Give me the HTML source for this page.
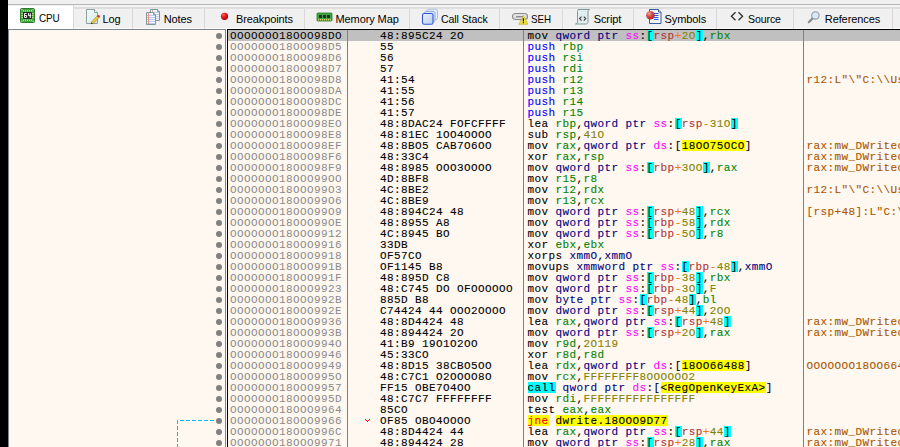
<!DOCTYPE html>
<html><head><meta charset="utf-8"><style>
*{margin:0;padding:0;box-sizing:border-box}
html,body{width:900px;height:447px;overflow:hidden;background:#f0f0f0;position:relative}
body{font-family:"Liberation Sans",sans-serif}
.black{position:absolute;left:0;top:0;width:8px;height:447px;background:#000}
.tline{position:absolute;left:8px;top:4px;width:892px;height:1px;background:#b8b8b8}
.tab{position:absolute;top:5px;height:24px;background:#f0f0f0;border-top:1px solid #f2f2f2;border-bottom:1px solid #fcfcfc}
.tab::after{content:"";position:absolute;left:0;right:0;top:0;height:2px;border-top:1px solid #f5f5f5;background:#dedede}
.tab::before{content:"";position:absolute;right:0;width:1px;top:2px;bottom:-1px;background:#d9d9d9}
.tab.tsel::before{top:-1px}
.tab.tsel{background:#fff;border-bottom-color:#fff}
.tab.tsel::after{display:none}
.ico{position:absolute;top:8px;width:16px;height:16px}
.ico svg{display:block}
.tlab{position:absolute;top:13px;transform-origin:0 0;font-size:11px;line-height:13px;color:#000;white-space:nowrap;letter-spacing:-0.1px}
.side{position:absolute;left:8px;top:29px;width:218px;height:418px;background:#fff8f0;border-left:1px solid #7d8590;border-top:1px solid #7d8590;border-right:1px solid #7d8590}
.gap{position:absolute;left:226px;top:29px;width:1px;height:418px;background:#f8f8f8}
.dis-frame{position:absolute;left:227px;top:29px;width:673px;height:418px;background:#fff8f0;border-left:1px solid #000;border-top:1px solid #000}
.row{position:absolute;left:228px;width:672px;height:11px;font-family:"Liberation Mono",monospace;font-size:11px;line-height:11px;white-space:pre;-webkit-text-stroke:0.1px currentColor}
.row.sel{background:#c0c0c0}
.row>div{position:absolute;top:0;height:11px;line-height:13px;letter-spacing:0.4px}
.row span{display:inline-block;height:11px;line-height:13px;vertical-align:top}
.addr{left:2px;width:117px;color:#8a8a8a;-webkit-text-stroke:0}
.sel .addr{color:#000}
.bytes{left:152px;width:145px;color:#000}
.dis{left:299.5px;width:276px;color:#000}
.cmt{left:578.5px;width:100px;color:#aa5500}
.vsep{position:absolute;top:30px;width:1px;height:417px;background:#808080}
.dot{position:absolute;left:215.5px;width:6px;height:6px;border-radius:50%;background:#808080}
.mn{color:#000}.pp{color:#0000ff}.call{color:#000;background:#00ffff}.jcc{color:#ff0000;background:#ffff00}
.reg{color:#008300}.sz{color:#000080}.seg{color:#ff00ff}.bs{color:#000;background:#00ffff}
.base{color:#b03434}.op{color:#f27711}.val{color:#828200}.ad{color:#000;background:#ffff00}
</style></head><body>
<div class="black"></div>
<div class="tline"></div>
<div class="tab tsel" style="left:8px;width:66px"></div><div class="tlab" style="left:39.0px;top:12px;transform:scaleX(0.9)">CPU</div><div class="tab" style="left:74px;width:59px"></div><div class="tlab" style="left:102.4px;top:13px;transform:scaleX(1)">Log</div><div class="tab" style="left:133px;width:72px"></div><div class="tlab" style="left:163.7px;top:13px;transform:scaleX(1)">Notes</div><div class="tab" style="left:205px;width:100px"></div><div class="tlab" style="left:235.9px;top:13px;transform:scaleX(1)">Breakpoints</div><div class="tab" style="left:305px;width:105px"></div><div class="tlab" style="left:335.5px;top:13px;transform:scaleX(1)">Memory Map</div><div class="tab" style="left:410px;width:90px"></div><div class="tlab" style="left:441.1px;top:13px;transform:scaleX(0.96)">Call Stack</div><div class="tab" style="left:500px;width:63px"></div><div class="tlab" style="left:531.1px;top:13px;transform:scaleX(0.89)">SEH</div><div class="tab" style="left:563px;width:71px"></div><div class="tlab" style="left:593.7px;top:13px;transform:scaleX(1)">Script</div><div class="tab" style="left:634px;width:83px"></div><div class="tlab" style="left:664.6px;top:13px;transform:scaleX(1)">Symbols</div><div class="tab" style="left:717px;width:77px"></div><div class="tlab" style="left:748.2px;top:13px;transform:scaleX(0.96)">Source</div><div class="tab" style="left:794px;width:99px"></div><div class="tlab" style="left:824.8px;top:13px;transform:scaleX(1)">References</div><div class="tab" style="left:893px;width:108px"></div>
<svg style="position:absolute;left:0;top:0;overflow:visible" width="900" height="30">
<defs>
<linearGradient id="gpage" x1="0" y1="0" x2="1" y2="1"><stop offset="0" stop-color="#f8fcfc"/><stop offset="1" stop-color="#d4e6e8"/></linearGradient>
<radialGradient id="gred" cx="0.35" cy="0.3" r="0.75"><stop offset="0" stop-color="#ff6060"/><stop offset="0.5" stop-color="#dd1818"/><stop offset="1" stop-color="#a00000"/></radialGradient>
<radialGradient id="gred2" cx="0.35" cy="0.3" r="0.75"><stop offset="0" stop-color="#f4a0a0"/><stop offset="0.5" stop-color="#d04848"/><stop offset="1" stop-color="#a82020"/></radialGradient>
<linearGradient id="gblue" x1="0" y1="0" x2="1" y2="1"><stop offset="0" stop-color="#eef4fc"/><stop offset="1" stop-color="#b8cce8"/></linearGradient>
</defs>
<!-- CPU -->
<g transform="translate(20,8)">
<rect x="0.5" y="0.5" width="14" height="14" rx="1" fill="#44a844" stroke="#2c7c2c"/>
<g fill="#d8cc84"><rect x="3" y="2" width="1" height="1.6"/><rect x="3" y="11.4" width="1" height="1.6"/><rect x="5" y="2" width="1" height="1.6"/><rect x="5" y="11.4" width="1" height="1.6"/><rect x="7" y="2" width="1" height="1.6"/><rect x="7" y="11.4" width="1" height="1.6"/><rect x="9" y="2" width="1" height="1.6"/><rect x="9" y="11.4" width="1" height="1.6"/><rect x="11" y="2" width="1" height="1.6"/><rect x="11" y="11.4" width="1" height="1.6"/><rect x="1.4" y="5" width="1.6" height="1"/><rect x="12" y="5" width="1.6" height="1"/><rect x="1.4" y="7" width="1.6" height="1"/><rect x="12" y="7" width="1.6" height="1"/><rect x="1.4" y="9" width="1.6" height="1"/><rect x="12" y="9" width="1.6" height="1"/><circle cx="1.8" cy="1.8" r="0.7"/><circle cx="13.2" cy="1.8" r="0.7"/><circle cx="1.8" cy="13.2" r="0.7"/><circle cx="13.2" cy="13.2" r="0.7"/></g>
<rect x="3" y="4" width="9" height="7" fill="#282828"/>
<path d="M6.6 5.5H4.5V9.5H6.6V7.5H4.5M8.5 5.2V7.6H11.2M10.3 5.2V10" fill="none" stroke="#f4f4f4" stroke-width="1"/>
</g>
<!-- Log -->
<g transform="translate(84,8)">
<path d="M2.5 1.5H10.5L13.5 4.5V15.5H2.5Z" fill="url(#gpage)" stroke="#8aa2a2"/>
<path d="M10.5 1.5V4.5H13.5" fill="#fff" stroke="#8aa2a2"/>
<path d="M7.2 15.8L7.8 13.6L13.6 7.8L15.2 9.4L9.4 15.2Z" fill="#ecd448" stroke="#8c7418" stroke-width="0.6"/>
<circle cx="14.6" cy="8.3" r="1.3" fill="#e23030"/>
<path d="M7 16l0.6-1.6 1 1z" fill="#111"/>
</g>
<!-- Notes -->
<g transform="translate(144,8)">
<path d="M6.5 1.5H13.5L15.5 3.5V12.5H6.5Z" fill="#fbfcff" stroke="#7e9898"/>
<g stroke="#c0ccf2" stroke-width="1"><path d="M7 4.5h8M7 6.5h8M7 8.5h8M7 10.5h8"/></g>
<path d="M8.5 2v10" stroke="#f4a0a0" stroke-width="1"/>
<path d="M13.5 1.5V3.5H15.5" fill="#fff" stroke="#7e9898"/>
<path d="M2.5 4.5H9.5L11.5 6.5V16.5H2.5Z" fill="#fbfcff" stroke="#7e9898"/>
<g stroke="#b8c6f0" stroke-width="1"><path d="M3 7.5h8M3 9.5h8M3 11.5h8M3 13.5h8M3 15.5h8"/></g>
<path d="M4.5 5v11" stroke="#f09090" stroke-width="1"/>
<path d="M9.5 4.5V6.5H11.5" fill="#fff" stroke="#7e9898"/>
</g>
<!-- Breakpoints -->
<circle cx="224.5" cy="16.3" r="3.6" fill="url(#gred)"/>
<!-- Memory map -->
<g transform="translate(316,8)">
<rect x="1" y="5" width="15" height="8" rx="0.8" fill="#3ea83e" stroke="#1f7a1f" stroke-width="0.8"/>
<rect x="3" y="7" width="3" height="3" fill="#2a2a34"/><rect x="7" y="7" width="3" height="3" fill="#2a2a34"/><rect x="11" y="7" width="3" height="3" fill="#2a2a34"/>
<g fill="#e8d070"><rect x="2" y="11" width="1" height="1.4"/><rect x="4" y="11" width="1" height="1.4"/><rect x="6" y="11" width="1" height="1.4"/><rect x="8" y="11" width="1" height="1.4"/><rect x="10" y="11" width="1" height="1.4"/><rect x="12" y="11" width="1" height="1.4"/><rect x="14" y="11" width="1" height="1.4"/></g>
</g>
<!-- Call stack -->
<g transform="translate(420,8)">
<rect x="7" y="1.2" width="10.5" height="10.5" rx="1.8" fill="#e4ecf8" stroke="#a8c0e4"/>
<rect x="4.5" y="3.4" width="10.5" height="10.5" rx="1.8" fill="#d6e2f4" stroke="#8eaee0"/>
<rect x="2.5" y="5.5" width="10.5" height="10.8" rx="1.8" fill="url(#gblue)" stroke="#3656d8" stroke-width="1.1"/>
</g>
<!-- SEH -->
<g transform="translate(511,8)">
<rect x="1.5" y="5.5" width="15" height="6" rx="3" fill="#f4f4f4" stroke="#8a8a8a" stroke-width="1.2"/>
<rect x="3" y="7" width="12" height="3" rx="1.5" fill="none" stroke="#c8c8c8" stroke-width="0.8"/>
<rect x="4" y="8" width="8" height="1.4" fill="#8c8c8c"/>
<circle cx="4.6" cy="8.7" r="0.6" fill="#fff"/>
<path d="M12.4 7.4L16.9 16.3H7.9Z" fill="#f2e23a" stroke="#b4a424" stroke-width="0.6"/>
<path d="M12.4 10.3v3.2" stroke="#111" stroke-width="1.2"/><rect x="11.8" y="14.1" width="1.2" height="1.1" fill="#111"/>
</g>
<!-- Script -->
<g transform="translate(574,8)">
<path d="M4 1.5H15.5c-0.8 0.3-1.5 1-1.5 2V14c0 1-0.8 2-2 2H1.5c1-0.3 2-1 2-2V3.5c0-1 0.5-2 0.5-2Z" fill="#e2eeee" stroke="#7e9a9a"/>
<path d="M7.5 8.6L5.6 10.6L7.5 12.6M9.8 8.6L11.7 10.6L9.8 12.6" fill="none" stroke="#3a3a3a" stroke-width="1.1"/>
</g>
<!-- Symbols -->
<g transform="translate(645,8)">
<path d="M4.5 1.5H13.5L16 4V15.5H4.5Z" fill="#f2f6fc" stroke="#3a5a9a"/>
<path d="M13.5 1.5V4H16" fill="#fff" stroke="#3a5a9a"/>
<g stroke="#2a56d8" stroke-width="1"><path d="M9 5.5h4.5M9 7.5h4.5M9 9.5h4.5M9 11.5h4.5"/></g>
<circle cx="5.4" cy="7.2" r="4.3" fill="url(#gred2)"/>
</g>
<!-- Source -->
<path d="M735.5 12.3L731.4 16.3L735.5 20.3M738.5 12.3L742.6 16.3L738.5 20.3" fill="none" stroke="#2e2e2e" stroke-width="1.3"/>
<!-- References -->
<g>
<path d="M812.6 18.4L808.8 22.2" stroke="#8a8a8a" stroke-width="2.2" stroke-linecap="round"/>
<circle cx="815.4" cy="15.4" r="3.7" fill="#dce8f4" stroke="#8c98a4" stroke-width="1.1"/>
</g>
</svg>
<div class="side"></div>
<div class="gap"></div>
<div class="dis-frame"></div>
<div class="row sel" style="top:30px"><div class="addr">OOOOOOO18OOO98DO</div><div class="bytes">48:895C24 2O</div><div class="dis"><span class="mn">mov</span> <span class="sz">qword ptr</span> <span class="seg">ss</span><span class="mn">:</span><span class="bs">[</span><span class="base">rsp</span><span class="op">+</span><span class="val">2O</span><span class="bs">]</span><span class="mn">,</span><span class="reg">rbx</span></div><div class="cmt"></div></div><div class="dot" style="top:32.5px"></div><div class="row" style="top:41px"><div class="addr">OOOOOOO18OOO98D5</div><div class="bytes">55</div><div class="dis"><span class="pp">push</span> <span class="reg">rbp</span></div><div class="cmt"></div></div><div class="dot" style="top:43.5px"></div><div class="row" style="top:52px"><div class="addr">OOOOOOO18OOO98D6</div><div class="bytes">56</div><div class="dis"><span class="pp">push</span> <span class="reg">rsi</span></div><div class="cmt"></div></div><div class="dot" style="top:54.5px"></div><div class="row" style="top:63px"><div class="addr">OOOOOOO18OOO98D7</div><div class="bytes">57</div><div class="dis"><span class="pp">push</span> <span class="reg">rdi</span></div><div class="cmt"></div></div><div class="dot" style="top:65.5px"></div><div class="row" style="top:74px"><div class="addr">OOOOOOO18OOO98D8</div><div class="bytes">41:54</div><div class="dis"><span class="pp">push</span> <span class="reg">r12</span></div><div class="cmt">r12:L"\"C:\\Users</div></div><div class="dot" style="top:76.5px"></div><div class="row" style="top:85px"><div class="addr">OOOOOOO18OOO98DA</div><div class="bytes">41:55</div><div class="dis"><span class="pp">push</span> <span class="reg">r13</span></div><div class="cmt"></div></div><div class="dot" style="top:87.5px"></div><div class="row" style="top:96px"><div class="addr">OOOOOOO18OOO98DC</div><div class="bytes">41:56</div><div class="dis"><span class="pp">push</span> <span class="reg">r14</span></div><div class="cmt"></div></div><div class="dot" style="top:98.5px"></div><div class="row" style="top:107px"><div class="addr">OOOOOOO18OOO98DE</div><div class="bytes">41:57</div><div class="dis"><span class="pp">push</span> <span class="reg">r15</span></div><div class="cmt"></div></div><div class="dot" style="top:109.5px"></div><div class="row" style="top:118px"><div class="addr">OOOOOOO18OOO98EO</div><div class="bytes">48:8DAC24 FOFCFFFF</div><div class="dis"><span class="mn">lea</span> <span class="reg">rbp</span><span class="mn">,</span><span class="sz">qword ptr</span> <span class="seg">ss</span><span class="mn">:</span><span class="bs">[</span><span class="base">rsp</span><span class="op">-</span><span class="val">31O</span><span class="bs">]</span></div><div class="cmt"></div></div><div class="dot" style="top:120.5px"></div><div class="row" style="top:129px"><div class="addr">OOOOOOO18OOO98E8</div><div class="bytes">48:81EC 1OO4OOOO</div><div class="dis"><span class="mn">sub</span> <span class="reg">rsp</span><span class="mn">,</span><span class="val">41O</span></div><div class="cmt"></div></div><div class="dot" style="top:131.5px"></div><div class="row" style="top:140px"><div class="addr">OOOOOOO18OOO98EF</div><div class="bytes">48:8BO5 CAB7O6OO</div><div class="dis"><span class="mn">mov</span> <span class="reg">rax</span><span class="mn">,</span><span class="sz">qword ptr</span> <span class="seg">ds</span><span class="mn">:</span><span class="mn">[</span><span class="ad">18OO75OCO</span><span class="mn">]</span></div><div class="cmt">rax:mw_DWritecore</div></div><div class="dot" style="top:142.5px"></div><div class="row" style="top:151px"><div class="addr">OOOOOOO18OOO98F6</div><div class="bytes">48:33C4</div><div class="dis"><span class="mn">xor</span> <span class="reg">rax</span><span class="mn">,</span><span class="reg">rsp</span></div><div class="cmt">rax:mw_DWritecore</div></div><div class="dot" style="top:153.5px"></div><div class="row" style="top:162px"><div class="addr">OOOOOOO18OOO98F9</div><div class="bytes">48:8985 OOO3OOOO</div><div class="dis"><span class="mn">mov</span> <span class="sz">qword ptr</span> <span class="seg">ss</span><span class="mn">:</span><span class="bs">[</span><span class="base">rbp</span><span class="op">+</span><span class="val">3OO</span><span class="bs">]</span><span class="mn">,</span><span class="reg">rax</span></div><div class="cmt">rax:mw_DWritecore</div></div><div class="dot" style="top:164.5px"></div><div class="row" style="top:173px"><div class="addr">OOOOOOO18OOO99OO</div><div class="bytes">4D:8BF8</div><div class="dis"><span class="mn">mov</span> <span class="reg">r15</span><span class="mn">,</span><span class="reg">r8</span></div><div class="cmt"></div></div><div class="dot" style="top:175.5px"></div><div class="row" style="top:184px"><div class="addr">OOOOOOO18OOO99O3</div><div class="bytes">4C:8BE2</div><div class="dis"><span class="mn">mov</span> <span class="reg">r12</span><span class="mn">,</span><span class="reg">rdx</span></div><div class="cmt">r12:L"\"C:\\Users</div></div><div class="dot" style="top:186.5px"></div><div class="row" style="top:195px"><div class="addr">OOOOOOO18OOO99O6</div><div class="bytes">4C:8BE9</div><div class="dis"><span class="mn">mov</span> <span class="reg">r13</span><span class="mn">,</span><span class="reg">rcx</span></div><div class="cmt"></div></div><div class="dot" style="top:197.5px"></div><div class="row" style="top:206px"><div class="addr">OOOOOOO18OOO99O9</div><div class="bytes">48:894C24 48</div><div class="dis"><span class="mn">mov</span> <span class="sz">qword ptr</span> <span class="seg">ss</span><span class="mn">:</span><span class="bs">[</span><span class="base">rsp</span><span class="op">+</span><span class="val">48</span><span class="bs">]</span><span class="mn">,</span><span class="reg">rcx</span></div><div class="cmt">[rsp+48]:L"C:\\Users</div></div><div class="dot" style="top:208.5px"></div><div class="row" style="top:217px"><div class="addr">OOOOOOO18OOO99OE</div><div class="bytes">48:8955 A8</div><div class="dis"><span class="mn">mov</span> <span class="sz">qword ptr</span> <span class="seg">ss</span><span class="mn">:</span><span class="bs">[</span><span class="base">rbp</span><span class="op">-</span><span class="val">58</span><span class="bs">]</span><span class="mn">,</span><span class="reg">rdx</span></div><div class="cmt"></div></div><div class="dot" style="top:219.5px"></div><div class="row" style="top:228px"><div class="addr">OOOOOOO18OOO9912</div><div class="bytes">4C:8945 BO</div><div class="dis"><span class="mn">mov</span> <span class="sz">qword ptr</span> <span class="seg">ss</span><span class="mn">:</span><span class="bs">[</span><span class="base">rbp</span><span class="op">-</span><span class="val">5O</span><span class="bs">]</span><span class="mn">,</span><span class="reg">r8</span></div><div class="cmt"></div></div><div class="dot" style="top:230.5px"></div><div class="row" style="top:239px"><div class="addr">OOOOOOO18OOO9916</div><div class="bytes">33DB</div><div class="dis"><span class="mn">xor</span> <span class="reg">ebx</span><span class="mn">,</span><span class="reg">ebx</span></div><div class="cmt"></div></div><div class="dot" style="top:241.5px"></div><div class="row" style="top:250px"><div class="addr">OOOOOOO18OOO9918</div><div class="bytes">OF57CO</div><div class="dis"><span class="mn">xorps</span> <span class="sz">xmmO</span><span class="mn">,</span><span class="sz">xmmO</span></div><div class="cmt"></div></div><div class="dot" style="top:252.5px"></div><div class="row" style="top:261px"><div class="addr">OOOOOOO18OOO991B</div><div class="bytes">OF1145 B8</div><div class="dis"><span class="mn">movups</span> <span class="sz">xmmword ptr</span> <span class="seg">ss</span><span class="mn">:</span><span class="bs">[</span><span class="base">rbp</span><span class="op">-</span><span class="val">48</span><span class="bs">]</span><span class="mn">,</span><span class="sz">xmmO</span></div><div class="cmt"></div></div><div class="dot" style="top:263.5px"></div><div class="row" style="top:272px"><div class="addr">OOOOOOO18OOO991F</div><div class="bytes">48:895D C8</div><div class="dis"><span class="mn">mov</span> <span class="sz">qword ptr</span> <span class="seg">ss</span><span class="mn">:</span><span class="bs">[</span><span class="base">rbp</span><span class="op">-</span><span class="val">38</span><span class="bs">]</span><span class="mn">,</span><span class="reg">rbx</span></div><div class="cmt"></div></div><div class="dot" style="top:274.5px"></div><div class="row" style="top:283px"><div class="addr">OOOOOOO18OOO9923</div><div class="bytes">48:C745 DO OFOOOOOO</div><div class="dis"><span class="mn">mov</span> <span class="sz">qword ptr</span> <span class="seg">ss</span><span class="mn">:</span><span class="bs">[</span><span class="base">rbp</span><span class="op">-</span><span class="val">3O</span><span class="bs">]</span><span class="mn">,</span><span class="val">F</span></div><div class="cmt"></div></div><div class="dot" style="top:285.5px"></div><div class="row" style="top:294px"><div class="addr">OOOOOOO18OOO992B</div><div class="bytes">885D B8</div><div class="dis"><span class="mn">mov</span> <span class="sz">byte ptr</span> <span class="seg">ss</span><span class="mn">:</span><span class="bs">[</span><span class="base">rbp</span><span class="op">-</span><span class="val">48</span><span class="bs">]</span><span class="mn">,</span><span class="reg">bl</span></div><div class="cmt"></div></div><div class="dot" style="top:296.5px"></div><div class="row" style="top:305px"><div class="addr">OOOOOOO18OOO992E</div><div class="bytes">C74424 44 OOO2OOOO</div><div class="dis"><span class="mn">mov</span> <span class="sz">dword ptr</span> <span class="seg">ss</span><span class="mn">:</span><span class="bs">[</span><span class="base">rsp</span><span class="op">+</span><span class="val">44</span><span class="bs">]</span><span class="mn">,</span><span class="val">2OO</span></div><div class="cmt"></div></div><div class="dot" style="top:307.5px"></div><div class="row" style="top:316px"><div class="addr">OOOOOOO18OOO9936</div><div class="bytes">48:8D4424 48</div><div class="dis"><span class="mn">lea</span> <span class="reg">rax</span><span class="mn">,</span><span class="sz">qword ptr</span> <span class="seg">ss</span><span class="mn">:</span><span class="bs">[</span><span class="base">rsp</span><span class="op">+</span><span class="val">48</span><span class="bs">]</span></div><div class="cmt">rax:mw_DWritecore</div></div><div class="dot" style="top:318.5px"></div><div class="row" style="top:327px"><div class="addr">OOOOOOO18OOO993B</div><div class="bytes">48:894424 2O</div><div class="dis"><span class="mn">mov</span> <span class="sz">qword ptr</span> <span class="seg">ss</span><span class="mn">:</span><span class="bs">[</span><span class="base">rsp</span><span class="op">+</span><span class="val">2O</span><span class="bs">]</span><span class="mn">,</span><span class="reg">rax</span></div><div class="cmt">rax:mw_DWritecore</div></div><div class="dot" style="top:329.5px"></div><div class="row" style="top:338px"><div class="addr">OOOOOOO18OOO994O</div><div class="bytes">41:B9 19O1O2OO</div><div class="dis"><span class="mn">mov</span> <span class="reg">r9d</span><span class="mn">,</span><span class="val">2O119</span></div><div class="cmt"></div></div><div class="dot" style="top:340.5px"></div><div class="row" style="top:349px"><div class="addr">OOOOOOO18OOO9946</div><div class="bytes">45:33CO</div><div class="dis"><span class="mn">xor</span> <span class="reg">r8d</span><span class="mn">,</span><span class="reg">r8d</span></div><div class="cmt"></div></div><div class="dot" style="top:351.5px"></div><div class="row" style="top:360px"><div class="addr">OOOOOOO18OOO9949</div><div class="bytes">48:8D15 38CBO5OO</div><div class="dis"><span class="mn">lea</span> <span class="reg">rdx</span><span class="mn">,</span><span class="sz">qword ptr</span> <span class="seg">ds</span><span class="mn">:</span><span class="mn">[</span><span class="ad">18OO66488</span><span class="mn">]</span></div><div class="cmt">OOOOOOO18OO66488</div></div><div class="dot" style="top:362.5px"></div><div class="row" style="top:371px"><div class="addr">OOOOOOO18OOO995O</div><div class="bytes">48:C7C1 O2OOOO8O</div><div class="dis"><span class="mn">mov</span> <span class="reg">rcx</span><span class="mn">,</span><span class="val">FFFFFFFF8OOOOOO2</span></div><div class="cmt"></div></div><div class="dot" style="top:373.5px"></div><div class="row" style="top:382px"><div class="addr">OOOOOOO18OOO9957</div><div class="bytes">FF15 OBE7O4OO</div><div class="dis"><span class="call">call</span> <span class="sz">qword ptr</span> <span class="seg">ds</span><span class="mn">:</span><span class="mn">[</span><span class="ad">&lt;RegOpenKeyExA&gt;</span><span class="mn">]</span></div><div class="cmt"></div></div><div class="dot" style="top:384.5px"></div><div class="row" style="top:393px"><div class="addr">OOOOOOO18OOO995D</div><div class="bytes">48:C7C7 FFFFFFFF</div><div class="dis"><span class="mn">mov</span> <span class="reg">rdi</span><span class="mn">,</span><span class="val">FFFFFFFFFFFFFFFF</span></div><div class="cmt"></div></div><div class="dot" style="top:395.5px"></div><div class="row" style="top:404px"><div class="addr">OOOOOOO18OOO9964</div><div class="bytes">85CO</div><div class="dis"><span class="mn">test</span> <span class="reg">eax</span><span class="mn">,</span><span class="reg">eax</span></div><div class="cmt"></div></div><div class="dot" style="top:406.5px"></div><div class="row" style="top:415px"><div class="addr">OOOOOOO18OOO9966</div><div class="bytes">OF85 OBO4OOOO</div><div class="dis"><span class="jcc">jne</span> <span class="ad">dwrite.18OOO9D77</span></div><div class="cmt"></div></div><div class="dot" style="top:417.5px"></div><div class="row" style="top:426px"><div class="addr">OOOOOOO18OOO996C</div><div class="bytes">48:8D4424 44</div><div class="dis"><span class="mn">lea</span> <span class="reg">rax</span><span class="mn">,</span><span class="sz">qword ptr</span> <span class="seg">ss</span><span class="mn">:</span><span class="bs">[</span><span class="base">rsp</span><span class="op">+</span><span class="val">44</span><span class="bs">]</span></div><div class="cmt">rax:mw_DWritecore</div></div><div class="dot" style="top:428.5px"></div><div class="row" style="top:437px"><div class="addr">OOOOOOO18OOO9971</div><div class="bytes">48:894424 28</div><div class="dis"><span class="mn">mov</span> <span class="sz">qword ptr</span> <span class="seg">ss</span><span class="mn">:</span><span class="bs">[</span><span class="base">rsp</span><span class="op">+</span><span class="val">28</span><span class="bs">]</span><span class="mn">,</span><span class="reg">rax</span></div><div class="cmt">rax:mw_DWritecore</div></div><div class="dot" style="top:439.5px"></div>
<div class="vsep" style="left:347px"></div>
<div class="vsep" style="left:523px"></div>
<div class="vsep" style="left:803px"></div>
<svg style="position:absolute;left:0;top:0" width="900" height="447">
<path d="M214 420.5H177.5V447" fill="none" stroke="#00bbff" stroke-width="1" stroke-dasharray="4 2"/>
<g fill="#ff0000" shape-rendering="crispEdges"><rect x="365" y="419" width="1" height="1"/><rect x="366" y="420" width="1" height="1"/><rect x="367" y="421" width="1" height="1"/><rect x="368" y="420" width="1" height="1"/><rect x="369" y="419" width="1" height="1"/></g>
</svg>
</body></html>
